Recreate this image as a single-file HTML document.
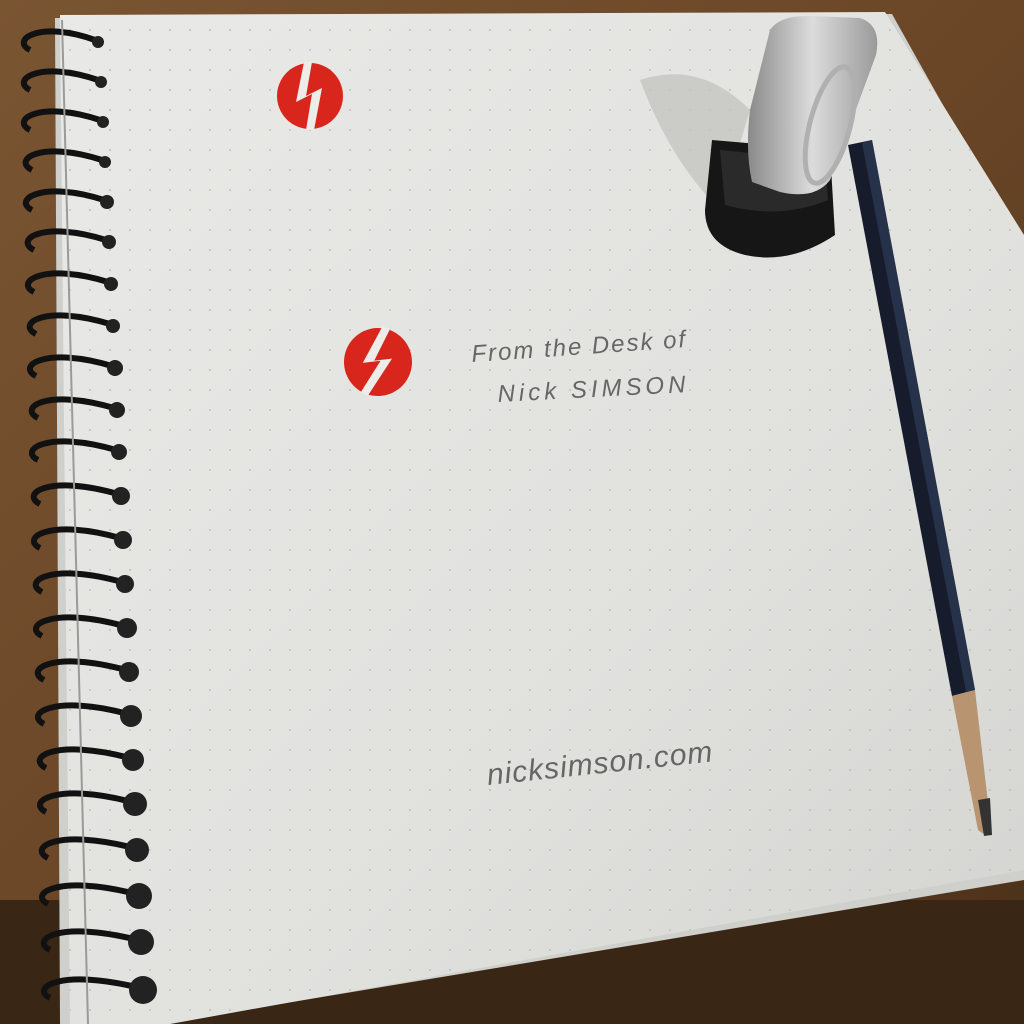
<!DOCTYPE html>
<html><head><meta charset="utf-8"><style>
html,body{margin:0;padding:0;width:1024px;height:1024px;overflow:hidden;background:#5a3d22}
svg{display:block}
</style></head><body>
<svg width="1024" height="1024" viewBox="0 0 1024 1024" xmlns="http://www.w3.org/2000/svg">
<defs>
<linearGradient id="wood" x1="0" y1="0" x2="1" y2="1">
<stop offset="0" stop-color="#7a5532"/><stop offset="0.5" stop-color="#6a4627"/><stop offset="1" stop-color="#4a3019"/>
</linearGradient>
<linearGradient id="paper" x1="0" y1="0" x2="1" y2="1">
<stop offset="0" stop-color="#e9e9e7"/><stop offset="0.6" stop-color="#e1e1de"/><stop offset="1" stop-color="#d3d3d0"/>
</linearGradient>
<pattern id="dots" width="20" height="20" patternUnits="userSpaceOnUse">
<circle cx="10" cy="10" r="0.9" fill="#b9b3b3"/>
</pattern>
<linearGradient id="metal" x1="0" y1="0" x2="1" y2="0">
<stop offset="0" stop-color="#8a8a8a"/><stop offset="0.5" stop-color="#dcdcdc"/><stop offset="1" stop-color="#9a9a9a"/>
</linearGradient>
</defs>
<rect width="1024" height="1024" fill="url(#wood)"/>
<rect x="0" y="900" width="1024" height="124" fill="#3a2614"/>
<polygon points="55,18 892,14 1024,250 1024,880 160,1024 60,1024" fill="#cfcfcc"/>
<polygon points="60,15 885,12 1024,235 1024,870 170,1024 70,1024" fill="url(#paper)"/>
<polygon points="60,15 885,12 1024,235 1024,870 170,1024 70,1024" fill="url(#dots)"/>
<path d="M640,80 Q700,60 750,110 L720,210 Q670,160 640,80Z" fill="#c4c4c1" opacity="0.8"/>
<g fill="none" stroke="#111" stroke-width="6">
<path d="M95,40 C40,20 10,40 30,50"/><path d="M98,80 C40,60 10,80 30,90"/><path d="M100,120 C40,100 10,120 30,130"/><path d="M102,160 C40,140 12,160 32,170"/><path d="M104,200 C42,180 12,200 32,210"/><path d="M106,240 C42,220 14,240 34,250"/><path d="M108,282 C44,262 14,282 34,292"/><path d="M110,324 C44,304 16,324 36,334"/><path d="M112,366 C46,346 16,366 36,376"/><path d="M114,408 C46,388 18,408 38,418"/><path d="M116,450 C48,430 18,450 38,460"/><path d="M118,494 C48,474 20,494 40,504"/><path d="M120,538 C50,518 20,538 40,548"/><path d="M122,582 C50,562 22,582 42,592"/><path d="M124,626 C52,606 22,626 42,636"/><path d="M126,670 C52,650 24,670 44,680"/><path d="M128,714 C54,694 24,714 44,724"/><path d="M130,758 C54,738 26,758 46,768"/><path d="M132,802 C56,782 26,802 46,812"/><path d="M134,848 C56,828 28,848 48,858"/><path d="M136,894 C58,874 28,894 48,904"/><path d="M138,940 C58,920 30,940 50,950"/><path d="M140,988 C60,968 30,988 50,998"/>
</g>
<g fill="#222">
<circle cx="98" cy="42" r="6"/><circle cx="101" cy="82" r="6"/><circle cx="103" cy="122" r="6"/><circle cx="105" cy="162" r="6"/><circle cx="107" cy="202" r="7"/><circle cx="109" cy="242" r="7"/><circle cx="111" cy="284" r="7"/><circle cx="113" cy="326" r="7"/><circle cx="115" cy="368" r="8"/><circle cx="117" cy="410" r="8"/><circle cx="119" cy="452" r="8"/><circle cx="121" cy="496" r="9"/><circle cx="123" cy="540" r="9"/><circle cx="125" cy="584" r="9"/><circle cx="127" cy="628" r="10"/><circle cx="129" cy="672" r="10"/><circle cx="131" cy="716" r="11"/><circle cx="133" cy="760" r="11"/><circle cx="135" cy="804" r="12"/><circle cx="137" cy="850" r="12"/><circle cx="139" cy="896" r="13"/><circle cx="141" cy="942" r="13"/><circle cx="143" cy="990" r="14"/>
</g>
<line x1="62" y1="20" x2="88" y2="1024" stroke="#9a9a98" stroke-width="2"/>
<g transform="translate(310,96)">
<circle r="33" fill="#d9261c"/>
<path d="M-6,-34 L-14,6 L2,-2 L-4,34 L4,34 L12,-8 L-4,0 L2,-34Z" fill="#ecece9"/>
</g>
<g transform="translate(378,362) rotate(20)">
<circle r="34" fill="#d9261c"/>
<path d="M-8,-35 L-14,6 L2,-2 L-6,35 L2,35 L12,-8 L-4,0 L0,-35Z" fill="#ecece9"/>
</g>
<g font-family="'Liberation Sans',sans-serif" fill="#666" font-size="24" font-style="italic">
<text x="472" y="362" transform="rotate(-4 472 362)" letter-spacing="2">From the Desk of</text>
<text x="498" y="402" transform="rotate(-3 498 402)" letter-spacing="4">Nick SIMSON</text>
<text x="488" y="785" font-size="30" transform="rotate(-6 488 785)" letter-spacing="1">nicksimson.com</text>
</g>
<polygon points="848,145 872,140 975,690 952,696" fill="#161c2b"/>
<polygon points="862,143 872,140 975,690 966,692" fill="#26314a"/>
<polygon points="952,696 975,690 990,820 985,835 978,830" fill="#b89470"/>
<polygon points="978,800 990,798 992,835 984,836" fill="#333"/>
<path d="M712,140 L830,150 L835,235 Q790,265 745,255 Q705,245 705,210Z" fill="#161616"/>
<path d="M720,150 L825,160 L828,200 Q780,220 725,205Z" fill="#2a2a2a"/>
<path d="M770,30 Q780,15 810,16 L860,18 Q882,25 876,55 L830,180 Q815,200 780,192 L752,182 Q745,150 750,110Z" fill="url(#metal)"/>
<ellipse cx="830" cy="125" rx="20" ry="60" fill="none" stroke="#b0b0b0" stroke-width="5" transform="rotate(15 830 125)"/>
</svg>
</body></html>
